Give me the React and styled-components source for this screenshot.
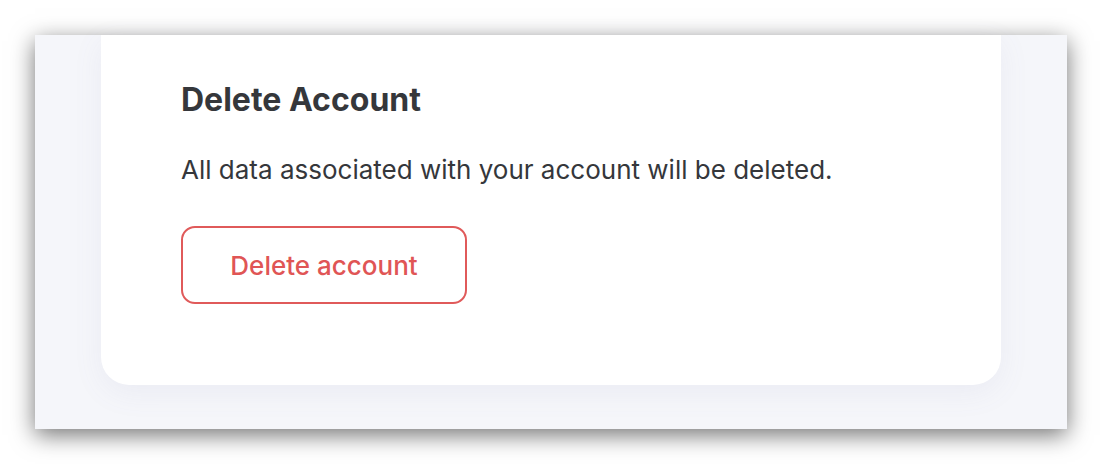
import React from "react";
import styled, { createGlobalStyle } from "styled-components";

const GlobalStyle = createGlobalStyle`
  * { box-sizing: border-box; }
  body {
    margin: 0;
    background: #ffffff;
    font-family: Inter, "Liberation Sans", sans-serif;
  }
`;

const Page = styled.div`
  width: 1102px;
  height: 464px;
  padding: 35px 35px 0 35px;
`;

const Window = styled.div`
  width: 1032px;
  height: 394px;
  background: #f5f6fa;
  box-shadow: 0 6px 22px rgba(0, 0, 0, 0.55);
  padding: 0 66px 44px;
  display: flex;
`;

const Card = styled.section`
  flex: 1;
  background: #ffffff;
  border-radius: 0 0 28px 28px;
  box-shadow: 0 8px 30px rgba(120, 120, 160, 0.08);
  padding: 46px 80px 0;
  display: flex;
  flex-direction: column;
  align-items: flex-start;
`;

const Title = styled.h2`
  margin: 0;
  font-size: 32px;
  line-height: 38px;
  font-weight: 700;
  color: #35373b;
`;

const Description = styled.p`
  margin: 35px 0 0;
  font-size: 26px;
  line-height: 32px;
  font-weight: 400;
  color: #35373b;
`;

const DangerButton = styled.button`
  margin-top: 40px;
  width: 286px;
  height: 78px;
  border: 2px solid #e05a5a;
  border-radius: 14px;
  background: #ffffff;
  color: #e05555;
  font-family: Inter, "Liberation Sans", sans-serif;
  font-size: 26px;
  font-weight: 500;
  cursor: pointer;
`;

export default function App() {
  return (
    <>
      <GlobalStyle />
      <Page>
        <Window>
          <Card>
            <Title>Delete Account</Title>
            <Description>All data associated with your account will be deleted.</Description>
            <DangerButton>Delete account</DangerButton>
          </Card>
        </Window>
      </Page>
    </>
  );
}
